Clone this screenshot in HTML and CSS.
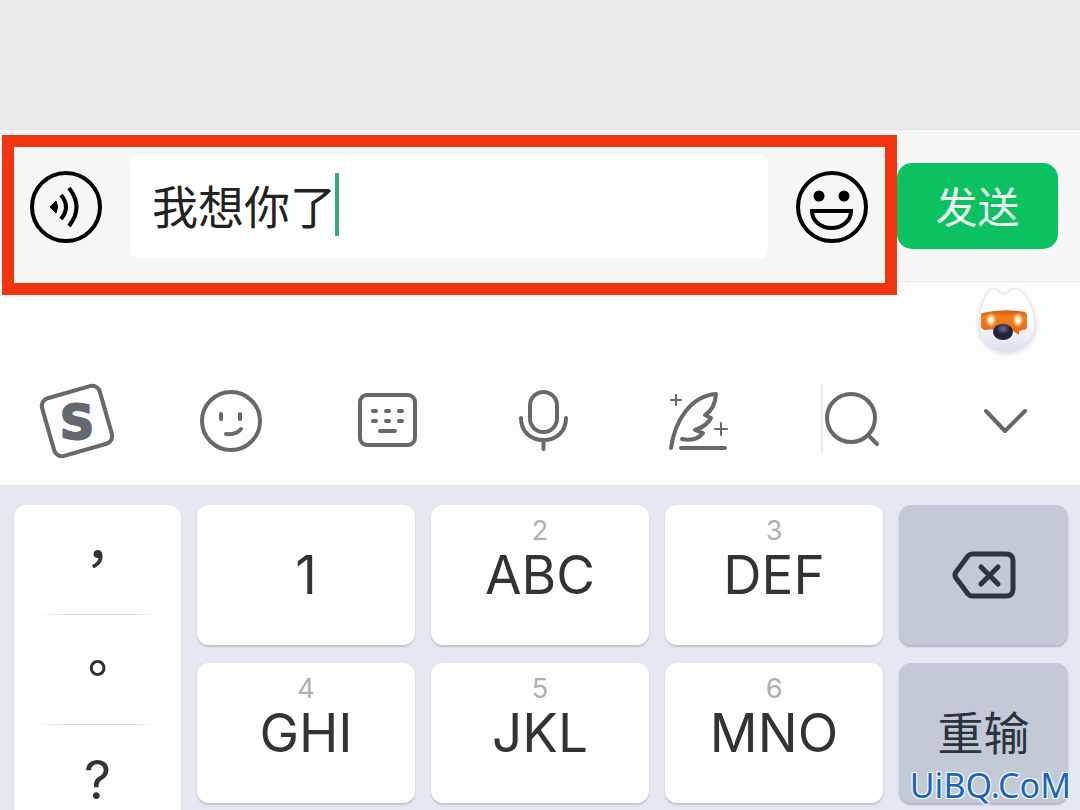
FILE: index.html
```
<!DOCTYPE html>
<html lang="zh-CN">

<head>
    <meta charset="UTF-8">
    <meta name="viewport" content="width=device-width, initial-scale=1.0">
    <title>聊天</title>
    <link rel="stylesheet" href="styles.css">
</head>

<body>
    <main class="chat"></main>

    <form class="compose">
        <div class="highlight">
            <button type="button" class="round-btn" aria-label="语音">
                <svg viewBox="0 0 74 74" fill="none" stroke="#000" stroke-width="4">
                    <circle cx="37" cy="37" r="34" />
                    <path d="M21 37l6-6q3 6 0 12z" fill="#000" stroke="#000" stroke-width="1" />
                    <path d="M32 25q10 12 0 24M40 18q15 19 0 38" />
                </svg>
            </button>
            <div class="field">
                <input type="text" class="message" value="我想你了" aria-label="消息">
                <span class="caret"></span>
            </div>
            <button type="button" class="round-btn" aria-label="表情">
                <svg viewBox="0 0 74 74" fill="none" stroke="#000" stroke-width="4">
                    <circle cx="37" cy="37" r="34" />
                    <circle cx="24" cy="26" r="5.500" fill="#000" stroke="none" />
                    <circle cx="49" cy="26" r="5.500" fill="#000" stroke="none" />
                    <path d="M17 41H56C56 51 47 58 36.500 58S17 51 17 41z" />
                </svg>
            </button>
        </div>
        <button type="button" class="send">发送</button>
    </form>

    <div class="assistant">
        <button type="button" class="robot" aria-label="助手">
            <svg viewBox="0 0 64 70">
                <defs>
                    <linearGradient id="head" x1="0" y1="0" x2="0" y2="1">
                        <stop offset="0.5" stop-color="#fff" />
                        <stop offset="1" stop-color="#d9deeb" />
                    </linearGradient>
                    <linearGradient id="visor" x1="0" y1="0" x2="0" y2="1">
                        <stop offset="0" stop-color="#c9600f" />
                        <stop offset="0.3" stop-color="#f5801e" />
                        <stop offset="1" stop-color="#e2601a" />
                    </linearGradient>
                    <radialGradient id="glow">
                        <stop offset="0.3" stop-color="#fffbe0" />
                        <stop offset="1" stop-color="#ffb04a" stop-opacity="0" />
                    </radialGradient>
                    <radialGradient id="nose" cx="0.5" cy="0.3">
                        <stop offset="0" stop-color="#6b6f92" />
                        <stop offset="0.7" stop-color="#22243f" />
                    </radialGradient>
                </defs>
                <path d="M4 39C4 26 8 12 14 5Q18 1 23 5Q27 9 31 8Q34 5 38 3Q43 1 47 6C54 13 60 26 60 39C60 55 48 66 32 66S4 55 4 39z" fill="url(#head)" stroke="#e2e3e9" stroke-width="1" />
                <path d="M7 27Q29 22 50 26Q52 27 52 30V41Q52 44 48 44L44 45V49L38 45Q24 42 10 44Q6 43 6 40V30Q6 28 7 27z" fill="url(#visor)" />
                <ellipse cx="16" cy="34" rx="6" ry="8" fill="url(#glow)" />
                <ellipse cx="43" cy="34" rx="6" ry="8" fill="url(#glow)" />
                <ellipse cx="28" cy="46" rx="10" ry="8" fill="url(#nose)" />
            </svg>
        </button>
    </div>

    <nav class="toolbar">
        <button type="button" class="tool" aria-label="输入法">
            <svg viewBox="0 0 80 80">
                <rect x="10" y="9" width="60" height="60" rx="8" transform="rotate(-16 40 39)" />
                <text x="40" y="57" text-anchor="middle" class="logo-letter">S</text>
            </svg>
        </button>
        <button type="button" class="tool" aria-label="表情">
            <svg viewBox="0 0 80 80">
                <circle cx="40" cy="39" r="29" />
                <path d="M30 32v5M49 32v5M35 52Q45 53 50 47" />
            </svg>
        </button>
        <button type="button" class="tool" aria-label="键盘">
            <svg viewBox="0 0 80 80">
                <rect x="14" y="13" width="55" height="50" rx="7" />
                <path d="M27 29h3M40 29h3M53 29h3M27 39h3M40 39h3M53 39h3M34 49h15" />
            </svg>
        </button>
        <button type="button" class="tool" aria-label="语音输入">
            <svg viewBox="0 0 80 80">
                <rect x="30" y="10" width="27" height="40" rx="13.500" />
                <path d="M21 36C21 50 31 58 43.500 58S66 50 66 36M43.500 58v9" />
            </svg>
        </button>
        <button type="button" class="tool" aria-label="写作">
            <svg viewBox="0 0 80 80">
                <path d="M17 66C21 38 37 14 62 12Q61 27 51 33L57 36Q53 44 41 48L49 51Q42 60 28 57M27 66H71" />
                <path d="M22 13v10M17 18h10M67 41v12M61 47h12" class="thin" />
            </svg>
        </button>
        <button type="button" class="tool" aria-label="搜索">
            <svg viewBox="0 0 80 80">
                <path d="M13 3v68" class="separator" />
                <circle cx="42" cy="36" r="24" />
                <path d="M59 53l9 9" />
            </svg>
        </button>
        <button type="button" class="tool" aria-label="收起">
            <svg viewBox="0 0 80 80">
                <path d="M23 29l19 20l20-20" />
            </svg>
        </button>
    </nav>

    <section class="keyboard">
        <div class="punctuation" lang="zh-TW">
            <button type="button" class="mark">，</button>
            <button type="button" class="mark">。</button>
            <button type="button" class="mark question">?</button>
        </div>
        <button type="button" class="key single">1</button>
        <button type="button" class="key"><small>2</small>ABC</button>
        <button type="button" class="key"><small>3</small>DEF</button>
        <button type="button" class="key action" aria-label="删除">
            <svg class="delete" viewBox="0 0 64 48">
                <path d="M20 3H54Q61 3 61 10V38Q61 45 54 45H20Q18 45 16 43L4 27Q2 24 4 21L16 5Q18 3 20 3z" />
                <path d="M29 16l17 17M46 16l-17 17" />
            </svg>
        </button>
        <button type="button" class="key"><small>4</small>GHI</button>
        <button type="button" class="key"><small>5</small>JKL</button>
        <button type="button" class="key"><small>6</small>MNO</button>
        <button type="button" class="key action">重输</button>
    </section>

    <div class="watermark">UiBQ.CoM</div>
</body>

</html>
```
FILE: styles.css
```
* {
    box-sizing: border-box;
}

body {
    display: flex;
    flex-direction: column;
    height: 100vh;
    margin: 0;
    overflow: hidden;
    background-color: #fdfdfe;
    font-family: "Noto Sans CJK SC", sans-serif;
    color: #333;
}

button {
    padding: 0;
    border: none;
    background: none;
    font-family: inherit;
    color: inherit;
    cursor: pointer;
}

svg {
    display: block;
}

.chat {
    flex: 1;
    background-color: #ebebeb;
}

/* message bar */
.compose {
    display: flex;
    flex: 0 0 153px;
    align-items: flex-start;
    min-height: 0;
    padding: 5px 22px 0 2px;
    border-top: 1px solid #e2e2e2;
    border-bottom: 1px solid #e9e9eb;
    background-color: #f7f7f8;
}

.highlight {
    display: flex;
    flex: 1;
    align-items: center;
    gap: 27px;
    height: 160px;
    padding: 8px 16px 25px 15px;
    border: 12px solid #f23510;
    background-color: #f7f6f7;
    position: relative;
}

.round-btn svg {
    width: 74px;
    height: 74px;
}

.field {
    flex: 1;
    position: relative;
}

.message {
    display: block;
    width: 100%;
    height: 103px;
    padding: 0 22px 6px;
    border: none;
    border-radius: 8px;
    outline: none;
    background-color: #fff;
    font-family: inherit;
    font-size: 46px;
    color: #222;
}

.caret {
    position: absolute;
    top: 18px;
    left: 205px;
    width: 4px;
    height: 63px;
    background-color: #36ab78;
}

.send {
    flex: 0 0 161px;
    height: 86px;
    margin-top: 28px;
    padding-bottom: 4px;
    border-radius: 15px;
    background-color: #0bc160;
    font-size: 42px;
    color: #f0fff6;
}

/* toolbar */
.assistant {
    display: flex;
    flex: 0 0 77px;
    justify-content: flex-end;
    align-items: center;
    padding-right: 41px;
}

.robot svg {
    width: 64px;
    height: 70px;
    filter: drop-shadow(0 1px 2px #d5d9ea);
}

.toolbar {
    display: flex;
    flex: 0 0 126px;
}

.tool {
    display: flex;
    flex: 1;
    justify-content: center;
    align-items: center;
}

.tool svg {
    width: 80px;
    height: 80px;
    fill: none;
    stroke: #68686a;
    stroke-width: 4;
    stroke-linecap: round;
    stroke-linejoin: round;
}

.tool .thin {
    stroke-width: 2;
}

.tool .separator {
    stroke: #d8d8da;
    stroke-width: 1;
}

.tool .logo-letter {
    fill: #666870;
    stroke: #666870;
    stroke-width: 2;
    font-family: "DejaVu Sans", sans-serif;
    font-size: 48px;
    font-weight: bold;
}

/* keys */
.keyboard {
    display: grid;
    flex: 0 0 325px;
    grid-template-columns: 167fr 218fr 218fr 218fr 169fr;
    grid-template-rows: repeat(3, 140px);
    gap: 18px 16px;
    min-height: 0;
    padding: 20px 12px 0 14px;
    overflow: hidden;
    background-color: #e5e7f1;
}

.punctuation {
    display: flex;
    flex-direction: column;
    grid-row: 1 / span 3;
    border-radius: 12px;
    background-color: #fefefe;
    box-shadow: 0 1px 2px #c5c7d0;
}

.mark {
    height: 110px;
    background: linear-gradient(to right, transparent 15%, #dcdcdc 30%, #dcdcdc 70%, transparent 85%) bottom / 100% 1px no-repeat;
    padding-bottom: 10px;
    font-family: "Noto Sans CJK TC", sans-serif;
    font-size: 50px;
    font-weight: 500;
    line-height: 100px;
}

.question {
    padding-bottom: 0;
    font-family: Inter, sans-serif;
    font-size: 53px;
    font-weight: 400;
}

.key {
    display: flex;
    flex-direction: column;
    align-items: center;
    padding-top: 8px;
    border-radius: 12px;
    background-color: #fefefe;
    box-shadow: 0 2px 2px #c0c2c9;
    font-family: Inter, "Noto Sans CJK SC", sans-serif;
    font-size: 53px;
    line-height: 52px;
}

.key small {
    font-size: 27px;
    line-height: 36px;
    color: #b0b0b0;
}

.single,
.action {
    justify-content: center;
    padding-top: 0;
}

.action {
    background-color: #c3c9d7;
    box-shadow: 0 2px 2px #b0b5c2;
    font-size: 46px;
    color: #2d323d;
}

.delete {
    width: 64px;
    height: 48px;
    fill: none;
    stroke: #2d3340;
    stroke-width: 5;
    stroke-linecap: round;
    stroke-linejoin: round;
}

.watermark {
    position: absolute;
    right: 9px;
    bottom: 5px;
    font-family: "Noto Sans", sans-serif;
    font-size: 34px;
    line-height: 40px;
    color: #1765c0;
    text-shadow: 1px 1px 0 #fff, -1px -1px 0 #fff, 1px -1px 0 #fff, -1px 1px 0 #fff;
}
```
